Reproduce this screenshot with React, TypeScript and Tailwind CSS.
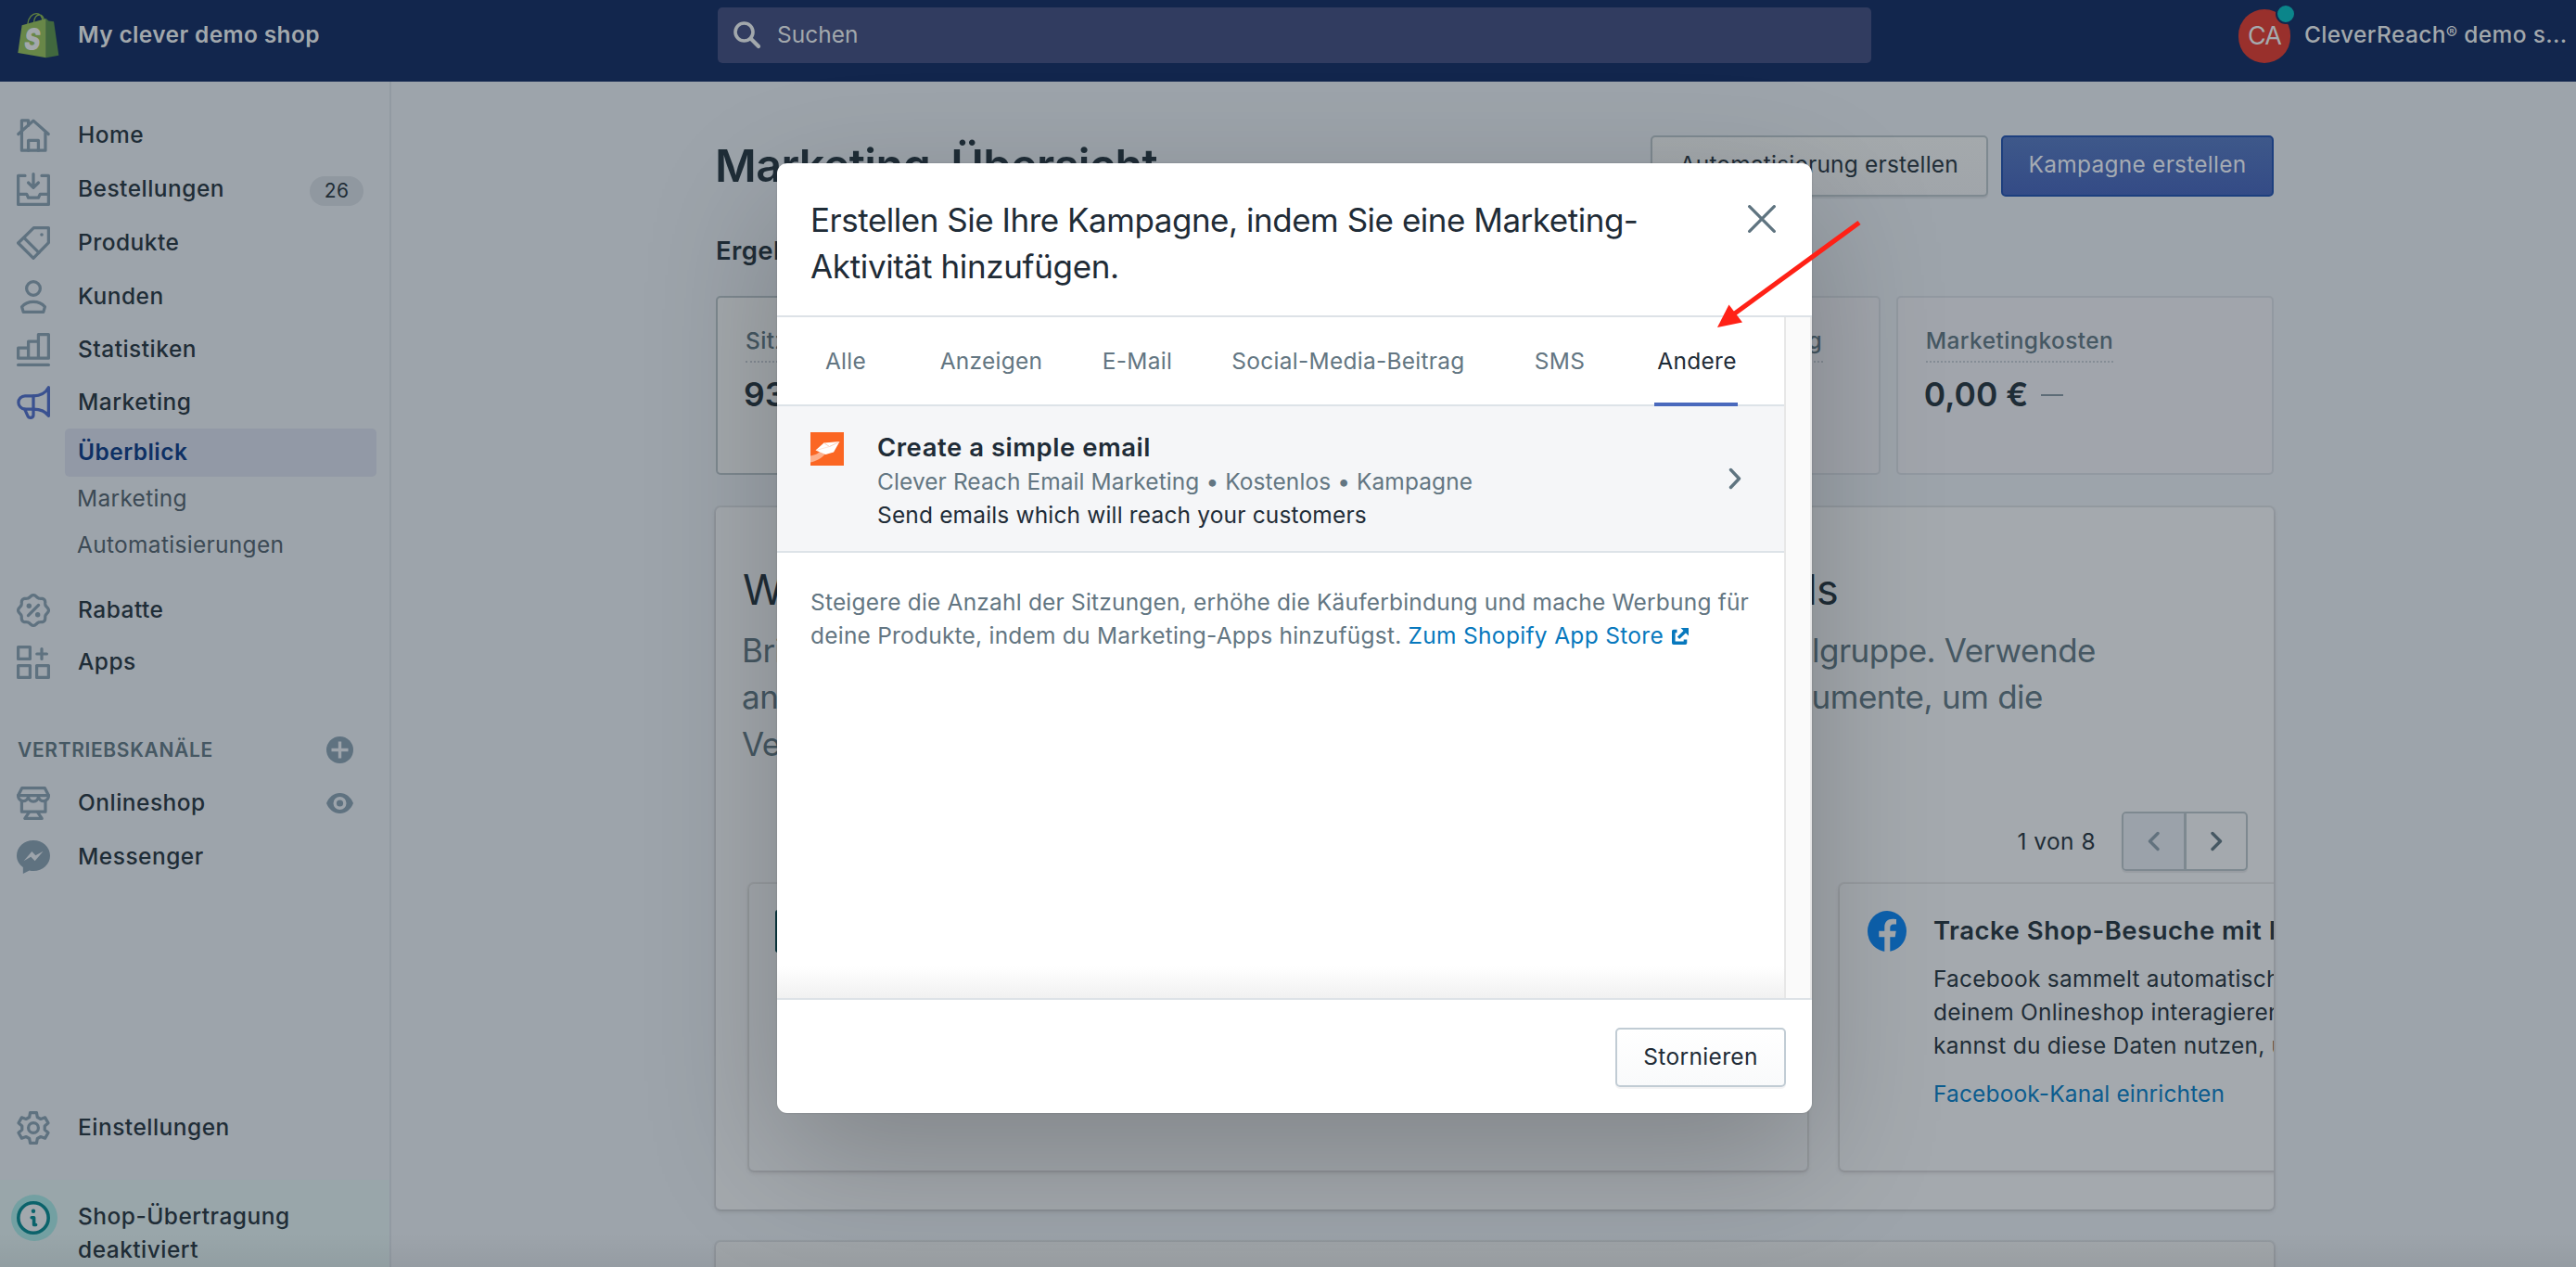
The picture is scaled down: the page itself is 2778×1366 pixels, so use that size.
import type { ReactNode } from "react";

type IconProps = { children: ReactNode; className?: string };

function NavIcon({ children, className = "text-[#5f7280]" }: IconProps) {
  return (
    <svg
      viewBox="0 0 20 20"
      className={"h-9 w-9 shrink-0 overflow-visible " + className}
      fill="none"
      stroke="currentColor"
      strokeWidth="1.8"
      strokeLinejoin="round"
      strokeLinecap="round"
    >
      {children}
    </svg>
  );
}

const badgePoints = Array.from({ length: 96 }, (_, i) => {
  const a = (i / 96) * Math.PI * 2;
  const r = 8.5 + 0.65 * Math.cos(8 * a);
  return `${(10 + r * Math.cos(a)).toFixed(2)},${(10 + r * Math.sin(a)).toFixed(2)}`;
}).join(" ");

const HomeIcon = () => (
  <NavIcon>
    <path d="M3 8.5V1H7V4" />
    <path d="M3 8.5V19H17.2V8.5" />
    <path d="M1 9.2 10 1.2 19 9.2" />
    <path d="M7 19V13H13V19" />
  </NavIcon>
);
const OrdersIcon = () => (
  <NavIcon>
    <path d="M5 1.9H.9V19.1H19.1V1.9H15" />
    <path d="M10 .9V8.6M7 6.1 10 9.1 13 6.1" />
    <path d="M1 13H6L7 15.1H13L14 13H19" />
  </NavIcon>
);
const ProductsIcon = () => (
  <NavIcon>
    <path d="M10.2 .9H19.1V9.8L10 19.1 .9 10Z" />
    <path d="M4.4 6.9 13.3 15.8" />
    <circle cx="15" cy="5" r="1" fill="currentColor" stroke="none" />
  </NavIcon>
);
const CustomersIcon = () => (
  <NavIcon>
    <circle cx="10" cy="5" r="4.1" />
    <path d="M4 19.1 3.1 16C5 13.8 7.4 13 10 13S15 13.8 16.9 16L16 19.1Z" />
  </NavIcon>
);
const StatsIcon = () => (
  <NavIcon>
    <path d="M.9 15.1V9H7M7 15.1V5.1H13M13 15.1V.9H19.1V15.1H.9" />
    <path d="M.9 19.1H19.1" />
  </NavIcon>
);
const MarketingIcon = () => (
  <NavIcon className="text-[#3a5190]">
    <path d="M19.1 .9C17.5 4 14.5 6 10 6H5A3.95 3.95 0 0 0 5 13.9H10C14 13.9 17.5 15.5 19.1 18Z" />
    <path d="M10 6V14" />
    <path d="M4.8 14 6.6 18C7.3 19.6 10 19.4 10 17.5V14" />
  </NavIcon>
);
const DiscountIcon = () => (
  <NavIcon>
    <polygon points={badgePoints} />
    <path d="M6.9 13.1 13.1 6.9" />
    <circle cx="7.4" cy="7.4" r="1.5" fill="currentColor" stroke="none" />
    <circle cx="12.6" cy="12.6" r="1.5" fill="currentColor" stroke="none" />
  </NavIcon>
);
const AppsIcon = () => (
  <NavIcon>
    <rect x=".9" y=".9" width="7.1" height="7.1" />
    <rect x=".9" y="12" width="7.1" height="7.1" />
    <rect x="12" y="12" width="7.1" height="7.1" />
    <path d="M12.1 5H18M15 2V8" />
  </NavIcon>
);
const ShopIcon = () => (
  <NavIcon>
    <path d="M3.2 .9H16.8L19.1 5.3H.9Z" />
    <path d="M.9 5.3A3.03 3 0 0 0 6.97 6 3.03 3 0 0 0 13.03 6 3.03 3 0 0 0 19.1 5.3" />
    <path d="M3 8.5V15.1H17.2V8.5" />
    <path d="M7.4 15.5 4.9 19.1H15.1L12.6 15.5" />
  </NavIcon>
);
const MessengerIcon = () => (
  <NavIcon>
    <path
      d="M10 0C4.4 0 0 4 0 9.2 0 12 1.4 14.4 3.8 16.1V20L7.6 18.1C8.4 18.3 9.2 18.4 10 18.4 15.6 18.4 20 14.4 20 9.2 20 4 15.6 0 10 0Z"
      fill="currentColor"
      stroke="none"
    />
    <path d="M4.2 12.4 9.1 6.7 11.3 9 15.9 6.5 10.9 12.3 8.5 9.9Z" fill="#9da4ab" stroke="none" />
  </NavIcon>
);
const GearIcon = () => (
  <NavIcon>
    <path d="M8.1 .9h3.8l.5 2.7 2 1.1 2.6-.9 1.9 3.3-2.1 1.8v2.2l2.1 1.8-1.9 3.3-2.6-.9-2 1.1-.5 2.7H8.1l-.5-2.7-2-1.1-2.6.9-1.9-3.3 2.1-1.8V8.9L1.1 7.1 3 3.8l2.6.9 2-1.1z" />
    <circle cx="10" cy="10" r="3" />
  </NavIcon>
);

function Logo() {
  return (
    <svg viewBox="0 0 134 148" className="h-[49px] w-[45px] shrink-0">
      <path d="M32 36C34 14 48 2 60 2 72 2 79 12 81 28M52 30C54 14 62 6 70 6 78 6 83 12 85 24" fill="none" stroke="#5f8040" strokeWidth="4" />
      <path d="M13 40 92 18V146L0 130Z" fill="#688748" />
      <path d="M92 18 100 26 117 28 133 138 92 146Z" fill="#41683e" />
      <text x="21" y="120" fontFamily="Inter" fontSize="100" fontWeight="900" fontStyle="italic" fill="#a3a8ab" textLength="52" lengthAdjust="spacingAndGlyphs">
        S
      </text>
    </svg>
  );
}

function NavRow({ icon, label, height, extra }: { icon: ReactNode; label: string; height: string; extra?: ReactNode }) {
  return (
    <div className={"flex items-center pl-[18px] " + height}>
      {icon}
      <span className="-mt-px ml-[30px] text-[24.5px] font-medium tracking-[0.48px] text-[#1f2d37]">{label}</span>
      {extra}
    </div>
  );
}

function TopBar() {
  return (
    <header className="flex h-[88px] bg-[#12264d]">
      <div className="flex w-[774px] items-start pl-[19px] pt-[14px]">
        <Logo />
        <span className="ml-5 mt-[7px] text-[24.5px] leading-[32px] font-semibold tracking-[0.36px] text-[#a2a8ac]">My clever demo shop</span>
      </div>
      <div className="mt-2 flex h-[60px] w-[1244px] items-center rounded-[5px] bg-[#313c60] pl-[17px]">
        <svg viewBox="0 0 30 30" className="h-[30px] w-[30px]" fill="none" stroke="#a2a8ac" strokeLinecap="round">
          <circle cx="11.5" cy="11.5" r="9.5" strokeWidth="3.6" />
          <path d="M18.8 18.8 27 27" strokeWidth="4.2" />
        </svg>
        <span className="-mt-0.5 ml-[17px] text-[24.5px] text-[#a2a8ac]">Suchen</span>
      </div>
      <div className="ml-[396px] flex items-start pt-[10px]">
        <div className="relative flex h-[58px] w-[56px] items-center justify-center rounded-full bg-[#99302c] text-[27px] tracking-[-0.8px] text-[#a5aaae]">
          CA
          <span className="absolute -right-[6px] -top-[6px] h-[22px] w-[22px] rounded-full border-2 border-[#12264d] bg-[#0b858a]" />
        </div>
        <span className="ml-[15px] mt-[11px] text-[24.5px] leading-[32px] font-medium tracking-[0.35px] text-[#a2a8ac]">
          CleverReach<span className="relative -top-[4px] text-[18.5px]">®</span> demo s...
        </span>
      </div>
    </header>
  );
}

function Sidebar() {
  return (
    <aside className="flex h-[1278px] w-[422px] shrink-0 flex-col border-r-2 border-[#929aa2] pt-[29px]">
      <NavRow height="h-[58px]" icon={<HomeIcon />} label="Home" />
      <NavRow
        height="h-[58px]"
        icon={<OrdersIcon />}
        label="Bestellungen"
        extra={<span className="mr-[28px] ml-auto mt-1 flex h-8 w-[58px] items-center justify-center rounded-full bg-[#9098a0] text-[21px] tracking-[0.3px] text-[#1f2d37]">26</span>}
      />
      <NavRow height="h-[58px]" icon={<ProductsIcon />} label="Produkte" />
      <NavRow height="h-[57px]" icon={<CustomersIcon />} label="Kunden" />
      <NavRow height="h-[57px]" icon={<StatsIcon />} label="Statistiken" />
      <NavRow height="h-[57px]" icon={<MarketingIcon />} label="Marketing" />
      <div className="mr-[14px] ml-[70px] text-[24.5px] text-[#3c4a55]">
        <div className="flex h-[52px] items-center rounded-[5px] bg-[#9299a6] pl-[14px] font-semibold tracking-[0.45px] text-[#0e3064]">
          <span className="-mt-0.5">Überblick</span>
        </div>
        <div className="flex h-[46px] items-center pl-[13px] tracking-[0.3px]">Marketing</div>
        <div className="flex h-[54px] items-center pl-[13px] tracking-[0.3px]">Automatisierungen</div>
      </div>
      <div className="mt-[15px]">
        <NavRow height="h-[58px]" icon={<DiscountIcon />} label="Rabatte" />
        <NavRow height="h-[54px]" icon={<AppsIcon />} label="Apps" />
      </div>
      <div className="mt-[42px] flex h-[50px] items-center justify-between pr-[39px] pl-[19px]">
        <span className="relative top-px text-[21px] font-semibold tracking-[0.65px] text-[#465863]">VERTRIEBSKANÄLE</span>
        <svg viewBox="0 0 29 29" className="h-[29px] w-[29px]">
          <circle cx="14.5" cy="14.5" r="14.5" fill="#5f7280" />
          <path d="M14.5 5.5V23.5M5.5 14.5H23.5" stroke="#9da4ab" strokeWidth="3.4" />
        </svg>
      </div>
      <div className="mt-1">
        <NavRow
          height="h-[58px]"
          icon={<ShopIcon />}
          label="Onlineshop"
          extra={
            <svg viewBox="0 0 29 22" className="mr-[39px] ml-auto h-[22px] w-[29px]">
              <path d="M14.5 0C8 0 2.5 4.5 0 11 2.5 17.5 8 22 14.5 22S26.5 17.5 29 11C26.5 4.5 21 0 14.5 0Z" fill="#5f7280" />
              <circle cx="14.5" cy="11" r="5.3" fill="#5f7280" stroke="#9da4ab" strokeWidth="3.4" />
            </svg>
          }
        />
        <NavRow height="h-[58px]" icon={<MessengerIcon />} label="Messenger" />
      </div>
      <div className="mt-auto">
        <NavRow height="h-[58px]" icon={<GearIcon />} label="Einstellungen" />
      </div>
      <div className="mt-[27px] flex h-[94px] shrink-0 items-start bg-[#99a6aa] pt-4 pl-3">
        <div className="flex h-[50px] w-[50px] items-center justify-center rounded-full bg-[#73a0a2]">
          <svg viewBox="0 0 36 36" className="-ml-0.5 h-9 w-9">
            <circle cx="18" cy="18" r="16.2" fill="#a2a8ad" stroke="#0b636b" strokeWidth="3.6" />
            <circle cx="18" cy="10.7" r="2.2" fill="#0b636b" />
            <path d="M16.2 17.8H18.6V25.5H20.6" fill="none" stroke="#0b636b" strokeWidth="3.6" strokeLinejoin="round" strokeLinecap="round" />
          </svg>
        </div>
        <span className="ml-[22px] mt-[5px] text-[24.5px] leading-[36px] font-medium tracking-[0.48px] text-[#1f2d37]">
          Shop-Übertragung
          <br />
          deaktiviert
        </span>
      </div>
    </aside>
  );
}

function Metric({ label, value, active, wide }: { label: string; value: string; active?: boolean; wide?: boolean }) {
  return (
    <div className={"rounded-[5px] border-2 pt-[25px] pl-[30px] " + (active ? "border-[#7e8990] bg-[#a4a9ad]" : "border-[#9299a1] bg-[#a1a5ac]")}>
      <span
        className={
          "inline-block h-[45px] whitespace-nowrap border-b-2 border-dotted border-[#858d96] text-[24.5px] leading-[43px] font-medium text-[#465863] " +
          (wide ? "tracking-[1.15px]" : "tracking-[0.4px]")
        }
      >
        {label}
      </span>
      <div className="mt-[15px] flex h-10 items-center">
        <span className="-ml-0.5 text-[35.5px] font-semibold text-[#1f2d37]">{value}</span>
        <span className="ml-[14px] h-[2.5px] w-[24px] bg-[#5d6c77]" />
      </div>
    </div>
  );
}

const cardShadow = "shadow-[0_0_0_2px_rgba(63,63,68,0.08),0_2px_5px_rgba(63,63,68,0.2)]";

function Main() {
  return (
    <main className="ml-[350px] flex w-[1680px] flex-col pt-[58px] text-[24.5px] text-[#1f2d37]">
      <div className="flex h-[66px] shrink-0 items-center">
        <h1 className="-ml-px text-[48.5px] leading-[60px] font-semibold tracking-[-0.6px]">Marketing-Übersicht</h1>
        <button className="ml-auto h-[66px] rounded-[5px] border-2 border-[#7e8990] bg-linear-to-b from-[#a4a9ac] to-[#a0a5aa] px-[30px] tracking-[0.2px] shadow-[0_2px_1px_rgba(22,29,37,0.08)]">
          <span className="relative -top-0.5">Automatisierung erstellen</span>
        </button>
        <button className="ml-[14px] h-[66px] w-[294px] rounded-[5px] border-2 border-[#1d3f7e] bg-linear-to-b from-[#3e588a] to-[#344b86] tracking-[0.25px] text-[#a5abb3]">
          <span className="relative -top-0.5">Kampagne erstellen</span>
        </button>
      </div>
      <h2 className="mt-[38px] h-10 shrink-0 text-[27.5px] leading-[40px] font-semibold tracking-[0.4px]">Ergebnisse der letzten 30 Tage</h2>
      <div className="mt-[29px] grid h-[193px] shrink-0 grid-cols-4 gap-[17px]">
        <Metric active label="Sitzungen durch Marketing" value="93" />
        <Metric label="Conversion" value="0,00 %" />
        <Metric wide label="Umsatz durch Marketing" value="0,00 €" />
        <Metric label="Marketingkosten" value="0,00 €" />
      </div>
      <section className={"mt-[35px] h-[757px] shrink-0 overflow-hidden rounded-[5px] bg-[#a4a9ae] pt-[61px] " + cardShadow}>
        <h2 className="ml-[29px] h-14 w-[1181px] text-[45px] leading-[56px] tracking-[-0.7px] whitespace-nowrap [text-align-last:justify]">
          Wachse mit Marketing-Kampagnen, Apps und den Tools
        </h2>
        <div className="mt-3 ml-[28px] text-[35px] leading-[50.4px] tracking-[-0.5px] whitespace-nowrap text-[#465863]">
          <p className="w-[1460px] [text-align-last:justify]">Bringe deine Produkte und deine Marke näher an deine ganz eigene Zielgruppe. Verwende</p>
          <p className="w-[1403px] [text-align-last:justify]">anpassbare Vorlagen, Anleitungen sowie diverse weitere Marketinginstrumente, um die</p>
          <p>Verkäufe zu steigern.</p>
        </div>
        <div className="mt-[48px] flex h-16 items-center justify-end pr-[28px]">
          <span className="tracking-[0.45px]">1 von 8</span>
          <div className="ml-[28px] flex h-16 w-[136px] rounded-[5px] border-2 border-[#7e8990] shadow-[0_2px_1px_rgba(22,29,37,0.08)]">
            <div className="flex flex-1 items-center justify-center rounded-l-[3px] border-r-[3px] border-[#7e8990] bg-[#9ba2aa]">
              <svg viewBox="0 0 13 22" className="h-[22px] w-[13px]" fill="none" stroke="#62727e" strokeWidth="3.4" strokeLinecap="round" strokeLinejoin="round">
                <path d="M11 2.5 2.5 11 11 19.5" />
              </svg>
            </div>
            <div className="flex flex-1 items-center justify-center">
              <svg viewBox="0 0 13 22" className="ml-0.5 h-[22px] w-[13px]" fill="none" stroke="#465863" strokeWidth="3.4" strokeLinecap="round" strokeLinejoin="round">
                <path d="M2 2.5 10.5 11 2 19.5" />
              </svg>
            </div>
          </div>
        </div>
        <div className="mt-[14px] ml-[36px] flex gap-[35px]">
          <div className={"h-[309px] w-[1141px] shrink-0 rounded-[5px] pt-[28px] pl-[28px] " + cardShadow}>
            <div className="h-[46px] w-[46px] rounded-[3px] bg-[#0c3a42]" />
          </div>
          <div className={"flex h-[309px] w-[1141px] shrink-0 rounded-[5px] pt-[29px] pl-[30px] " + cardShadow}>
            <svg viewBox="0 0 42 44" className="h-[44px] w-[42px] shrink-0">
              <ellipse cx="21" cy="22" rx="21" ry="22" fill="#0d61ad" />
              <path
                d="M18.3 44V28.3H12.3V21.8H18.3V17.5C18.3 11.8 21.7 8.7 27 8.7 29 8.7 31 9 31 9V14.5H28.2C25.3 14.5 24.3 16.3 24.3 18.2V21.8H30.7L29.7 28.3H24.3V44Z"
                fill="#a4a9ae"
              />
            </svg>
            <div className="ml-[29px] leading-[36px] whitespace-nowrap">
              <h3 className="mt-[3px] text-[27.5px] leading-[36px] font-semibold tracking-[0.5px]">Tracke Shop-Besuche mit Facebook-Pixel</h3>
              <p className="mt-4 tracking-[0.24px]">
                Facebook sammelt automatisch Daten, wenn Kunden mit
                <br />
                deinem Onlineshop interagieren. Anschließend
                <br />
                kannst du diese Daten nutzen, um Anzeigen zu schalten
              </p>
              <p className="mt-4 tracking-[0.15px] text-[#0c5c8e]">Facebook-Kanal einrichten</p>
            </div>
          </div>
        </div>
      </section>
      <section className={"mt-[35px] h-[120px] shrink-0 rounded-[5px] bg-[#a1a6aa] " + cardShadow} />
    </main>
  );
}

const tabs = [
  { label: "Alle", box: "w-[76px]" },
  { label: "Anzeigen", box: "w-[238px]" },
  { label: "E-Mail", box: "w-[77px]" },
  { label: "Social-Media-Beitrag", box: "w-[378px]" },
  { label: "SMS", box: "w-[78px]" },
];

function Modal() {
  return (
    <div className="flex h-[1024px] w-[1116px] flex-col overflow-hidden rounded-[11px] bg-white text-[24.5px] text-[#212b36]">
      <div className="flex h-[166px] border-b-2 border-[#dde2e7] pt-[36px] pl-9">
        <h2 className="w-[960px] text-[35px] leading-[50.4px] tracking-[-0.48px] text-[#1f2c37]">
          Erstellen Sie Ihre Kampagne, indem Sie eine Marketing-
          <br />
          <span className="tracking-[-0.35px]">Aktivität hinzufügen.</span>
        </h2>
        <svg viewBox="0 0 30 30" className="mt-[9px] ml-[51px] h-[30px] w-[30px]" stroke="#5f7480" strokeWidth="3.3" strokeLinecap="round">
          <path d="M1.7 1.7 28.3 28.3M28.3 1.7 1.7 28.3" />
        </svg>
      </div>
      <div className="flex h-[734px]">
        <div className="flex w-[1086px] flex-col">
          <div className="flex h-24 border-b-2 border-[#dde3e8] pl-[36px] tracking-[0.27px] text-[#637682]">
            {tabs.map((t) => (
              <div key={t.label} className={"flex h-[95px] items-center justify-center " + t.box}>
                {t.label}
              </div>
            ))}
            <div className="ml-[63px] flex h-24 w-[90px] items-center justify-center border-b-4 border-[#4a69bd] text-[#1f2c37]">
              <span className="relative top-px left-px">Andere</span>
            </div>
          </div>
          <div className="flex h-[158px] border-b-2 border-[#dde3e8] bg-[#f5f6f8] pl-[36px]">
            <svg viewBox="0 0 36 36" className="mt-[28px] h-9 w-9 shrink-0">
              <rect width="36" height="36" fill="#fb6623" />
              <path d="M0 25.5C6 24.5 8.5 22.5 10.5 20.5L16.5 23C12 28 6 31.5 0 32.5Z" fill="#fdb08c" />
              <path d="M14.5 11.5 31.5 10 25 21.5 16.5 24 5.5 19.5Z" fill="#fff" />
              <path d="M14.5 11.5 20.5 15.5 31 10.5" fill="none" stroke="#fdc5ab" strokeWidth="0.9" />
              <path d="M20.5 15.5 6 19.5" fill="none" stroke="#fdd9c8" strokeWidth="0.7" />
            </svg>
            <div className="mt-[25px] ml-[36px] w-[900px] leading-[36px]">
              <h3 className="h-[38px] text-[27.5px] leading-[38px] font-semibold tracking-[0.52px] text-[#1f2c37]">Create a simple email</h3>
              <p className="tracking-[0.08px] text-[#637682]">Clever Reach Email Marketing • Kostenlos • Kampagne</p>
              <p className="tracking-[0.16px] text-[#1f2c37]">Send emails which will reach your customers</p>
            </div>
            <svg viewBox="0 0 14 24" className="mt-[66px] ml-[18px] h-6 w-[14px]" fill="none" stroke="#5f7480" strokeWidth="3.4" strokeLinecap="round" strokeLinejoin="round">
              <path d="M2.5 2.5 11.5 12 2.5 21.5" />
            </svg>
          </div>
          <p className="mt-[35px] ml-9 leading-[36px] tracking-[0.19px] whitespace-nowrap text-[#637682]">
            Steigere die Anzahl der Sitzungen, erhöhe die Käuferbindung und mache Werbung für
            <br />
            <span className="tracking-[0.22px]">deine Produkte, indem du Marketing-Apps hinzufügst.</span>{" "}
            <span className="tracking-[0.32px] text-[#0778bd]">Zum Shopify App Store</span>
            <svg viewBox="0 0 18 18" className="mb-[3px] ml-[9px] inline h-[18px] w-[18px] overflow-visible" fill="none" stroke="#0778bd">
              <path d="M5.5 3.5H1.8V16.2H14.5V12.5" strokeWidth="3.6" strokeLinejoin="round" />
              <path d="M7 10.8 14 4" strokeWidth="3.3" />
              <path d="M9.5 0H18V8.5Z" fill="#0778bd" stroke="none" />
            </svg>
          </p>
          <div className="mt-auto h-[34px] bg-linear-to-b from-white to-[#f1f1f1]" />
        </div>
        <div className="w-[30px] border-x-2 border-[#e7e7e7] bg-[#fafafa]" />
      </div>
      <div className="flex flex-1 items-start justify-end border-t-2 border-[#dde2e7] pt-[30px] pr-[28px]">
        <button className="h-16 w-[184px] rounded-[5px] border-2 border-[#c1ccd4] bg-linear-to-b from-white to-[#f9fafb] tracking-[0.35px] shadow-[0_2px_0_rgba(22,29,37,0.05)]">
          <span className="relative -top-px">Stornieren</span>
        </button>
      </div>
    </div>
  );
}

export default function App() {
  return (
    <div className="relative h-[1366px] w-[2778px] overflow-hidden bg-[#9da4ab] font-[Inter,sans-serif]">
      <TopBar />
      <div className="flex h-[1278px]">
        <Sidebar />
        <Main />
      </div>
      <div className="absolute inset-x-0 bottom-0 h-9 bg-linear-to-b from-transparent to-black/5" />
      <div className="absolute left-[838px] top-[176px] rounded-[11px] shadow-[0_47px_144px_rgba(0,0,0,0.22),0_0_2px_rgba(0,0,0,0.2)]">
        <Modal />
      </div>
      <svg viewBox="0 0 160 120" className="absolute left-[1850px] top-[236px] h-[120px] w-[160px]">
        <path d="M155 4 18 104" stroke="#ff2116" strokeWidth="5.2" />
        <path d="M2 117 14.5 92.5 29 111.5Z" fill="#ff2116" />
      </svg>
    </div>
  );
}
